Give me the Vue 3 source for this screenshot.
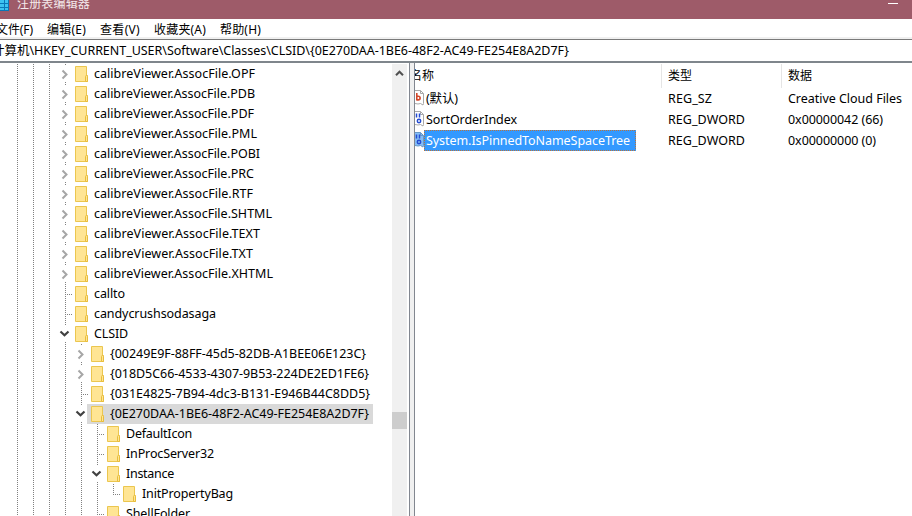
<script setup>
const vFit = (el, { value }) => {
  const n = [...el.textContent.trim()].length
  el.style.letterSpacing = '0px'
  const w = el.getBoundingClientRect().width
  el.style.letterSpacing = (value - w) / n + 'px'
}

const menus = [
  { label: '文件(F)', left: -4, width: 37 },
  { label: '编辑(E)', left: 47, width: 39 },
  { label: '查看(V)', left: 100, width: 40 },
  { label: '收藏夹(A)', left: 154, width: 52 },
  { label: '帮助(H)', left: 220, width: 41 },
].map((m, i, a) => ({ ...m, gap: i ? m.left - a[i - 1].left - a[i - 1].width : m.left }))

// kind: c = collapsed, o = expanded, l = leaf, e = last leaf of its branch
const rows = [
  ['calibreViewer.AssocFile.OPF', 161], ['calibreViewer.AssocFile.PDB', 161],
  ['calibreViewer.AssocFile.PDF', 160], ['calibreViewer.AssocFile.PML', 163],
  ['calibreViewer.AssocFile.POBI', 166], ['calibreViewer.AssocFile.PRC', 160],
  ['calibreViewer.AssocFile.RTF', 159], ['calibreViewer.AssocFile.SHTML', 178],
  ['calibreViewer.AssocFile.TEXT', 166], ['calibreViewer.AssocFile.TXT', 159],
  ['calibreViewer.AssocFile.XHTML', 179],
  ['callto', 31, 3, 'l'], ['candycrushsodasaga', 122, 3, 'l'], ['CLSID', 34, 3, 'o'],
  ['{00249E9F-88FF-45d5-82DB-A1BEE06E123C}', 256, 4], ['{018D5C66-4533-4307-9B53-224DE2ED1FE6}', 259, 4],
  ['{031E4825-7B94-4dc3-B131-E946B44C8DD5}', 260, 4, 'l'],
  ['{0E270DAA-1BE6-48F2-AC49-FE254E8A2D7F}', 259, 4, 'o', true],
  ['DefaultIcon', 66, 5, 'l'], ['InProcServer32', 88, 5, 'l'], ['Instance', 48, 5, 'o'],
  ['InitPropertyBag', 91, 6, 'e'], ['ShellFolder', 64, 5, 'l'],
].map(([label, width, depth = 3, kind = 'c', selected = false]) => ({ label, width, depth, kind, selected }))

const values = [
  { icon: 'sz', name: '(默认)', nw: 32, type: 'REG_SZ', tw: 44, data: 'Creative Cloud Files', dw: 114 },
  { icon: 'bin', name: 'SortOrderIndex', nw: 91, type: 'REG_DWORD', tw: 77, data: '0x00000042 (66)', dw: 95 },
  { icon: 'bin', name: 'System.IsPinnedToNameSpaceTree', nw: 204, type: 'REG_DWORD', tw: 77, data: '0x00000000 (0)', dw: 88, selected: true },
]
</script>

<template>
  <div class="window">
    <header class="titlebar">
      <svg class="app" width="10" height="12" viewBox="0 0 10 12">
        <path d="M0 0h9v11H0z" fill="#0a78b8" />
        <path d="M0 0h4v3H0zM5 0h3v3H5zM0 4h4v3H0zM5 4h3v3H5zM0 8h4v2H0zM5 8h3v2H5z" fill="#3cc3f2" />
      </svg>
      <span v-fit="73" class="title">注册表编辑器</span>
      <i class="minimize" />
    </header>
    <nav class="menu">
      <span v-for="m in menus" :key="m.label" v-fit="m.width" :style="{ marginLeft: m.gap + 'px' }">{{ m.label }}</span>
    </nav>
    <div class="address"><span v-fit="577">计算机\HKEY_CURRENT_USER\Software\Classes\CLSID\{0E270DAA-1BE6-48F2-AC49-FE254E8A2D7F}</span></div>
    <main class="body">
      <section class="tree">
        <div class="rows">
          <div v-for="r in rows" :key="r.label" class="row">
            <i v-for="d in r.depth" :key="d" class="guide" />
            <span class="branch" :class="r.kind">
              <svg v-if="r.kind === 'c'" class="arrow" width="11" height="16" viewBox="0 0 11 16"><path d="M3.500 4.500 7.500 8.500 3.500 12.500" fill="none" stroke="#a6a6a6" stroke-width="2" /></svg>
              <svg v-if="r.kind === 'o'" class="arrow" width="11" height="16" viewBox="0 0 11 16"><path d="M1.500 6.500 5.500 10.200 9.500 6.500" fill="none" stroke="#404040" stroke-width="2.200" /></svg>
            </span>
            <span class="item" :class="{ selected: r.selected }">
              <svg width="13" height="16" viewBox="0 0 13 16">
                <path d="M.5 .5h11v9h1v6H.5z" fill="#ffe594" stroke="#ebc64f" />
                <path d="M10.500 15.500V10.500q0-1 1-1t1 1v5z" fill="#ffe594" stroke="#e8bd3c" />
              </svg>
              <span v-fit="r.width" class="label">{{ r.label }}</span>
            </span>
          </div>
        </div>
        <div class="scrollbar">
          <svg width="15" height="18" viewBox="0 0 15 18"><path d="M4 11.200 7.500 7.700 11 11.200" fill="none" stroke="#505050" stroke-width="2" /></svg>
          <div class="thumb" />
        </div>
      </section>
      <div class="splitter" />
      <section class="list">
        <div class="record head">
          <div class="name"><span v-fit="24" class="clipped">名称</span></div>
          <div class="type"><span v-fit="24">类型</span></div>
          <div class="data"><span v-fit="24">数据</span></div>
        </div>
        <div v-for="v in values" :key="v.name" class="record" :class="{ active: v.selected }">
          <div class="name">
            <svg class="vicon" width="9" height="16" viewBox="0 0 9 16">
              <path d="M0 .5h5.500l3 3v10l-.5 1.500-2.500-1.500-2.500 .5-3-.5" :fill="v.selected ? '#84bdf5' : '#fff'" :stroke="v.selected ? '#6698c9' : '#a8a8a8'" />
              <path d="M5.500 .5v3h3" fill="none" :stroke="v.selected ? '#6698c9' : '#a8a8a8'" />
              <path v-if="v.icon === 'sz'" d="M1.800 3v7.500M1.800 6.300h1.500q1.800 0 1.800 1.800t-1.800 1.800h-1.500" fill="none" stroke="#d2472a" stroke-width="1.600" />
              <g v-else fill="none" stroke="#234bd2" stroke-width="1.500"><path d="M1.500 2.500v4M4.500 2.500v4" /><circle cx="4" cy="10" r="1.700" /></g>
            </svg>
            <span class="vname"><span v-fit="v.nw">{{ v.name }}</span></span>
          </div>
          <div class="type"><span v-fit="v.tw">{{ v.type }}</span></div>
          <div class="data"><span v-fit="v.dw">{{ v.data }}</span></div>
        </div>
      </section>
    </main>
  </div>
</template>

<style>
body { margin: 0; overflow: hidden; }
</style>

<style scoped>
.window { width: 912px; height: 516px; overflow: hidden; display: flex; flex-direction: column; background: #fff; color: #000; font: 12.5px/20px "Noto Sans", "Noto Sans CJK SC", sans-serif; white-space: nowrap; }
.window * { box-sizing: border-box; }
svg { display: block; flex: none; }
span { flex: none; }
.titlebar { height: 19px; flex: none; background: #9e5b69; display: flex; align-items: flex-start; overflow: hidden; }
.title { margin: -6px 0 0 7px; color: #f4e9eb; font-size: 12px; }
.minimize { width: 10px; height: 1px; background: #fff; margin: 3px 14px 0 auto; }
.menu { height: 20px; flex: none; display: flex; border-bottom: 2px solid #f0f0f0; font-size: 12px; line-height: 21px; }
.address { height: 24px; flex: none; border-top: 1px solid #7a7a7a; border-bottom: 2px solid #7f868c; display: flex; line-height: 22px; }
.address span { margin-left: -8px; }
.body { flex: 1; min-height: 0; display: flex; }
.tree { width: 410px; flex: none; display: flex; border-right: 1px solid #828790; padding-right: 2px; overflow: hidden; }
.rows { flex: 1; padding-top: 1px; }
.row { height: 20px; display: flex; padding-left: 17px; }
.guide { width: 16px; flex: none; background: repeating-linear-gradient(to bottom, #808080 0 1px, transparent 1px 2px) 0 0 / 1px 20px no-repeat; }
.branch { width: 16px; height: 20px; flex: none; margin-right: -6px; background: repeating-linear-gradient(to bottom, #808080 0 1px, transparent 1px 2px) 0 0 / 1px 20px no-repeat; }
.branch.l { background: repeating-linear-gradient(to bottom, #808080 0 1px, transparent 1px 2px) 0 0 / 1px 20px no-repeat, repeating-linear-gradient(to right, #808080 0 1px, transparent 1px 2px) 0 10px / 8px 1px no-repeat; }
.branch.e { background: repeating-linear-gradient(to bottom, #808080 0 1px, transparent 1px 2px) 0 0 / 1px 10px no-repeat, repeating-linear-gradient(to right, #808080 0 1px, transparent 1px 2px) 0 10px / 8px 1px no-repeat; }
.arrow { margin: 2px 0 0 -6px; background: #fff; position: relative; top: -1px; }
.branch.c .arrow { top: 0; }
.item { display: flex; height: 20px; margin-left: -4px; padding: 2px 4px 0 4px; }
.item.selected { background: #d9d9d9; }
.label { margin: -2px 0 0 6px; }
.scrollbar { width: 15px; flex: none; background: #f0f0f0; margin-top: 1px; }
.thumb { height: 17px; margin-top: 330px; background: #cdcdcd; }
.splitter { width: 5px; flex: none; background: #f0f0f0; border-right: 1px solid #828790; }
.list { flex: 1; min-width: 0; overflow: hidden; }
.record { display: flex; height: 21px; line-height: 22px; }
.record.head { height: 25px; line-height: 24px; font-size: 12px; padding-top: 1px; }
.head .name, .head .type { border-right: 1px solid #e5e5e5; }
.name { width: 247px; flex: none; display: flex; }
.head .name { overflow: hidden; }
.clipped { margin-left: -5px; }
.type { width: 120px; flex: none; padding-left: 6px; }
.data { padding-left: 6px; }
.type span, .data span, .vname span { display: inline-block; }
.vicon { margin-top: 2px; }
.vname { height: 21px; padding: 0 6px 0 2px; }
.active .vname {
  color: #fff;
  background:
    repeating-linear-gradient(to right, #b8733c 0 1px, #3399ff 1px 2px) 0 0 / 100% 1px no-repeat,
    repeating-linear-gradient(to right, #b8733c 0 1px, #3399ff 1px 2px) 0 100% / 100% 1px no-repeat,
    repeating-linear-gradient(to bottom, #b8733c 0 1px, #3399ff 1px 2px) 0 0 / 1px 100% no-repeat,
    repeating-linear-gradient(to bottom, #b8733c 0 1px, #3399ff 1px 2px) 100% 0 / 1px 100% no-repeat,
    #3399ff;
}
</style>
